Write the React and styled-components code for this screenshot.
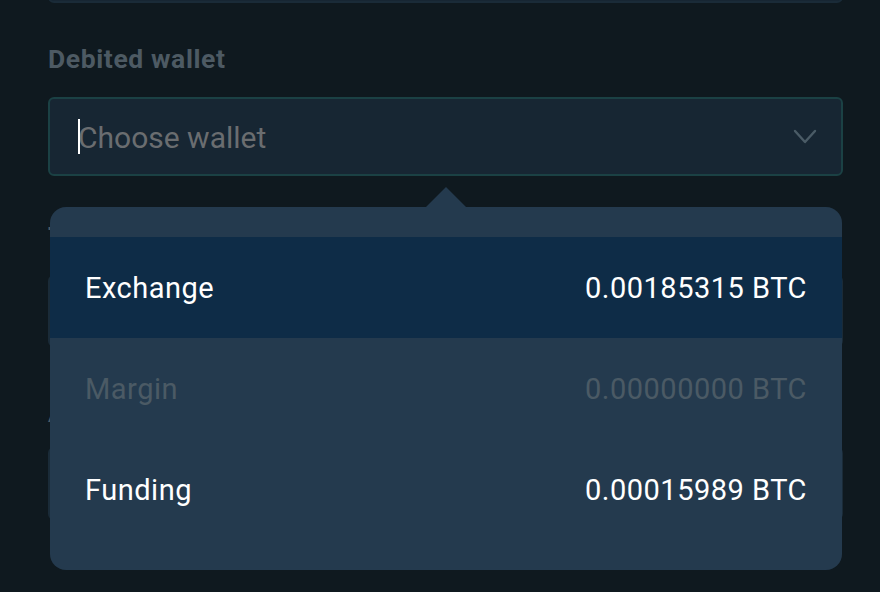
import React from "react";
import styled, { createGlobalStyle } from "styled-components";

const Global = createGlobalStyle`
  html, body { margin: 0; padding: 0; background: #0f191f; }
  body { font-family: Roboto, "Noto Sans", "Liberation Sans", sans-serif; overflow: hidden; }
`;

const Page = styled.div`
  position: relative;
  width: 880px;
  height: 592px;
  padding: 0 37px 0 48px;
  box-sizing: border-box;
  display: flex;
  flex-direction: column;
`;

const Field = styled.div`
  height: ${(p) => p.$h || 79}px;
  margin-top: ${(p) => p.$mt || 0}px;
  box-sizing: border-box;
  border-radius: 6px;
  background: #172633;
  border: 2px solid ${(p) => (p.$focus ? "#1b4144" : "#1a2b38")};
  display: flex;
  align-items: center;
  padding: 0 24px 0 28px;
  flex-shrink: 0;
`;

const Label = styled.div`
  margin-top: ${(p) => p.$mt || 0}px;
  height: 28px;
  line-height: 28px;
  font-size: 26.5px;
  font-weight: 700;
  color: #4d5a63;
  letter-spacing: 0.6px;
`;

const Caret = styled.span`
  width: 2px;
  height: 35px;
  background: #ffffff;
  flex-shrink: 0;
  position: relative;
  z-index: 1;
`;

const Placeholder = styled.span`
  flex: 1;
  font-size: 30px;
  color: #6a6d70;
  margin: 2px 0 0 -2px;
`;

const Chevron = () => (
  <svg width="24" height="16" viewBox="0 0 24 16" fill="none">
    <path d="M2 2 L12 13 L22 2" stroke="#4a5b66" strokeWidth="2.4" strokeLinecap="round" strokeLinejoin="round" />
  </svg>
);

const Popup = styled.div`
  position: absolute;
  left: 50px;
  top: 207px;
  width: 792px;
  height: 363px;
  box-sizing: border-box;
  background: #243a4e;
  border-radius: 16px;
  padding: 30px 0;
  display: flex;
  flex-direction: column;
  z-index: 2;

  &::before {
    content: "";
    position: absolute;
    top: -20px;
    left: 376px;
    border-left: 20px solid transparent;
    border-right: 20px solid transparent;
    border-bottom: 20px solid #243a4e;
  }
`;

const Row = styled.div`
  height: 101px;
  display: flex;
  align-items: center;
  justify-content: space-between;
  padding: 0 35px;
  font-size: 29px;
  letter-spacing: 0.5px;
  background: ${(p) => (p.$selected ? "#0e2c47" : "transparent")};
  color: ${(p) => (p.$disabled ? "#4b5a65" : "#ffffff")};
`;

const wallets = [
  { name: "Exchange", value: "0.00185315 BTC", selected: true },
  { name: "Margin", value: "0.00000000 BTC", disabled: true },
  { name: "Funding", value: "0.00015989 BTC" },
];

export default function App() {
  return (
    <Page>
      <Global />
      <Field $mt={-76} />
      <Label $mt={42}>Debited wallet</Label>
      <Field $mt={24} $focus>
        <Caret />
        <Placeholder>Choose wallet</Placeholder>
        <Chevron />
      </Field>
      <Label $mt={46}>Transfer to</Label>
      <Field $mt={25} $h={72} />
      <Label $mt={52}>Amount</Label>
      <Field $mt={20} $h={73} />
      <Popup>
        {wallets.map((w) => (
          <Row key={w.name} $selected={w.selected} $disabled={w.disabled}>
            <span>{w.name}</span>
            <span>{w.value}</span>
          </Row>
        ))}
      </Popup>
    </Page>
  );
}
